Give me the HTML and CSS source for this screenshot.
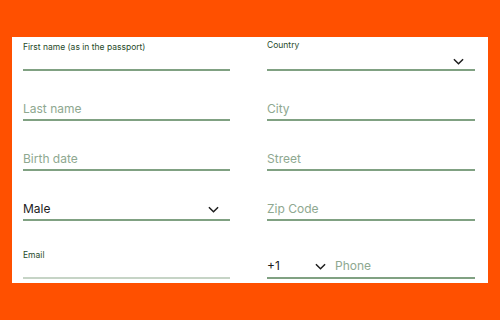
FILE: index.html
```html
<!DOCTYPE html>
<html lang="en">
<head>
  <meta charset="UTF-8">
  <meta name="viewport" content="width=device-width, initial-scale=1.0">
  <title>Passenger Details</title>
  <link rel="stylesheet" href="styles.css">
</head>
<body>
  <!-- Passenger form -->
  <form class="form-panel">
    <div class="field labelled">
      <span class="field-label">First name (as in the passport)</span>
    </div>
    <div class="field labelled select">
      <span class="field-label">Country</span>
      <div class="select-row">
        <span class="value"></span>
        <svg class="chevron" viewBox="0 0 12 7"><path d="M1 1l5 5 5-5"/></svg>
      </div>
    </div>

    <div class="field"><span class="placeholder">Last name</span></div>
    <div class="field"><span class="placeholder">City</span></div>

    <div class="field"><span class="placeholder">Birth date</span></div>
    <div class="field"><span class="placeholder">Street</span></div>

    <div class="field select">
      <div class="select-row">
        <span class="value">Male</span>
        <svg class="chevron" viewBox="0 0 12 7"><path d="M1 1l5 5 5-5"/></svg>
      </div>
    </div>
    <div class="field"><span class="placeholder">Zip Code</span></div>

    <div class="field labelled faded">
      <span class="field-label">Email</span>
    </div>
    <div class="field phone">
      <div class="phone-row">
        <span class="value code">+1</span>
        <svg class="chevron" viewBox="0 0 12 7"><path d="M1 1l5 5 5-5"/></svg>
        <span class="placeholder">Phone</span>
      </div>
    </div>
  </form>
</body>
</html>
```

FILE: styles.css
```css
/* Global Styles */
body {
  margin: 0;
  padding: 37px 12px 0;
  background: #ff5000;
  font-family: 'Inter', 'Liberation Sans', sans-serif;
}

/* Form panel */
.form-panel {
  width: 476px;
  height: 246px;
  box-sizing: border-box;
  padding: 0 13px 0 11px;
  background: #fff;
  display: grid;
  grid-template-columns: 207px 208px;
  grid-template-rows: 34px 50px 50px 50px 58px;
  column-gap: 37px;
  overflow: hidden;
}

.field {
  display: flex;
  flex-direction: column;
  justify-content: flex-end;
  border-bottom: 2px solid #80a182;
  padding-bottom: 2px;
}

.field.faded {
  border-bottom-color: #c6d4c6;
}

.field.labelled {
  justify-content: space-between;
  padding-top: 5px;
}

.field.select.labelled {
  padding-top: 3px;
}

.field-label {
  font-size: 8.5px;
  line-height: 11px;
  color: #1f4a2a;
}

.faded .field-label {
  margin-top: 24px;
}

.placeholder {
  font-size: 12px;
  line-height: 16px;
  color: #8ea890;
}

.value {
  font-size: 12px;
  line-height: 16px;
  color: #1c1c1c;
}

.select-row {
  display: flex;
  align-items: center;
  justify-content: space-between;
  padding-right: 11px;
}

.labelled .select-row {
  margin-bottom: 2px;
}

.chevron {
  width: 11px;
  height: 7px;
  fill: none;
  stroke: #1c1c1c;
  stroke-width: 1.6;
}

.phone {
  padding-bottom: 3px;
}

.phone-row {
  display: flex;
  align-items: center;
}

.phone-row .code {
  width: 48px;
}

.phone-row .chevron {
  margin-right: 9px;
}
```
